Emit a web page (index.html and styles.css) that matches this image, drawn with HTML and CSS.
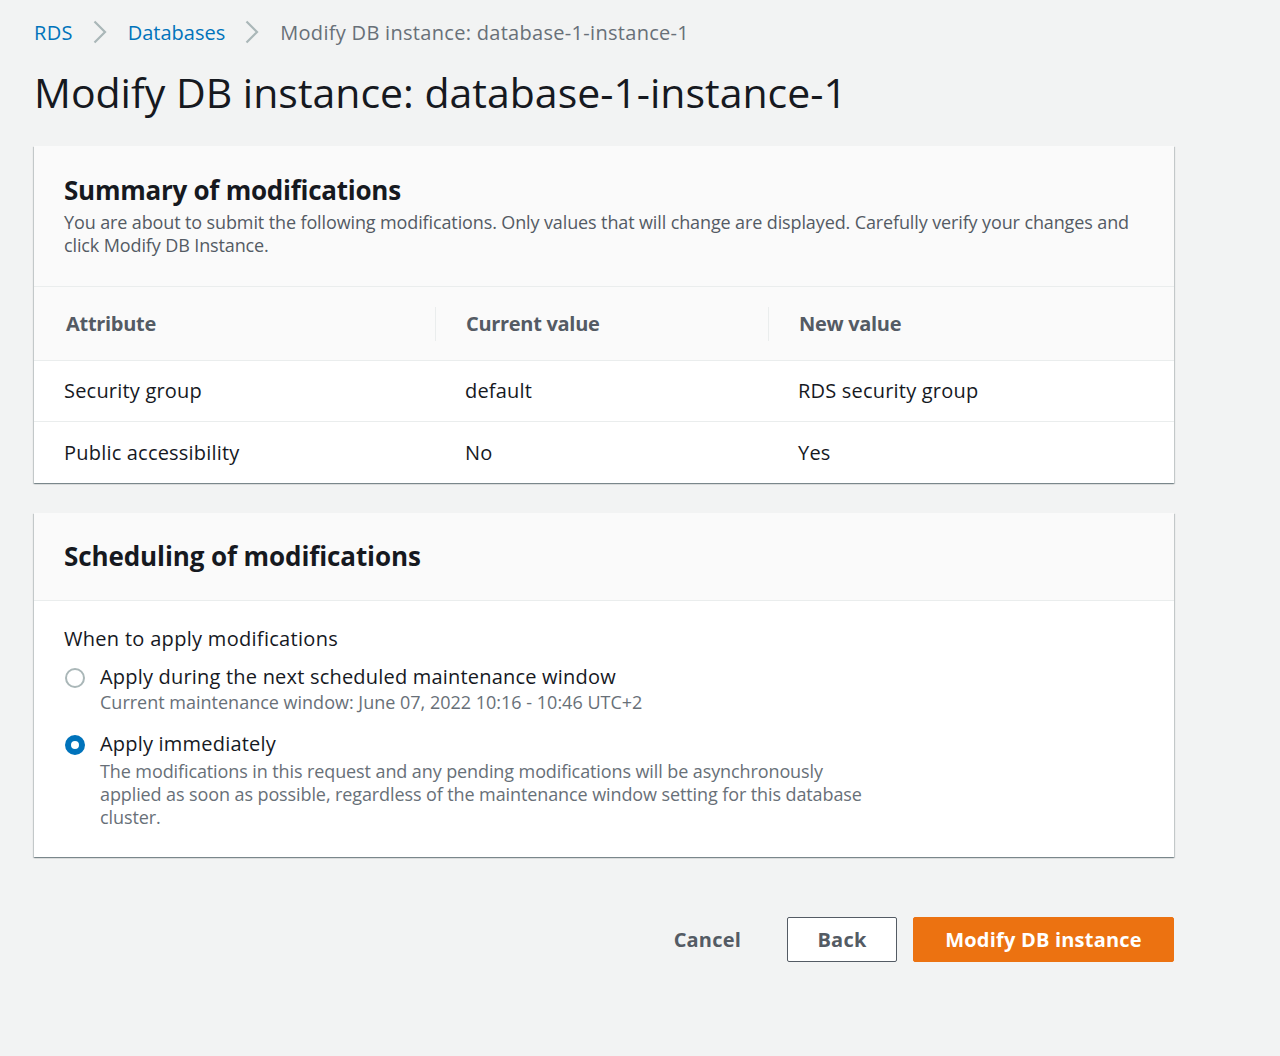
FILE: index.html
```html
<!DOCTYPE html>
<html>
<head>
<meta charset="utf-8">
<link rel="stylesheet" href="styles.css">
</head>
<body>
<div class="page">
  <nav class="crumbs">
    <a class="crumb-link">RDS</a>
    <svg class="chev" width="14" height="24" viewBox="0 0 14 24"><path d="M1.5 1.5 L12 12 L1.5 22.5" fill="none" stroke="#aab7b8" stroke-width="2.2"/></svg>
    <a class="crumb-link">Databases</a>
    <svg class="chev" width="14" height="24" viewBox="0 0 14 24"><path d="M1.5 1.5 L12 12 L1.5 22.5" fill="none" stroke="#aab7b8" stroke-width="2.2"/></svg>
    <span class="crumb-current">Modify DB instance: database-1-instance-1</span>
  </nav>
  <h1 class="title">Modify DB instance: database-1-instance-1</h1>

  <section class="card">
    <header class="card-head summary-head">
      <h2 class="card-title">Summary of modifications</h2>
      <p class="card-desc">You are about to submit the following modifications. Only values that will change are displayed. Carefully verify your changes and click Modify DB Instance.</p>
    </header>
    <div class="table">
      <div class="trow thead">
        <div class="cell c1">Attribute</div>
        <div class="cell c2 sep">Current value</div>
        <div class="cell c3 sep">New value</div>
      </div>
      <div class="trow">
        <div class="cell c1">Security group</div>
        <div class="cell c2">default</div>
        <div class="cell c3">RDS security group</div>
      </div>
      <div class="trow">
        <div class="cell c1">Public accessibility</div>
        <div class="cell c2">No</div>
        <div class="cell c3">Yes</div>
      </div>
    </div>
  </section>

  <section class="card">
    <header class="card-head sched-head">
      <h2 class="card-title sched-title">Scheduling of modifications</h2>
    </header>
    <div class="card-body">
      <div class="field-label">When to apply modifications</div>
      <div class="radio">
        <span class="dot"></span>
        <div class="radio-text">
          <div class="radio-label">Apply during the next scheduled maintenance window</div>
          <div class="radio-desc">Current maintenance window: June 07, 2022 10:16 - 10:46 UTC+2</div>
        </div>
      </div>
      <div class="radio second">
        <span class="dot on"></span>
        <div class="radio-text">
          <div class="radio-label">Apply immediately</div>
          <div class="radio-desc narrow">The modifications in this request and any pending modifications will be asynchronously applied as soon as possible, regardless of the maintenance window setting for this database cluster.</div>
        </div>
      </div>
    </div>
  </section>

  <div class="actions">
    <button class="btn link">Cancel</button>
    <button class="btn normal">Back</button>
    <button class="btn primary">Modify DB instance</button>
  </div>
</div>
</body>
</html>
```

FILE: styles.css
```css
html, body {
  margin: 0;
  padding: 0;
  background: #f2f3f3;
}
body {
  font-family: "Open Sans", "Noto Sans", sans-serif;
  color: #16191f;
}
.page {
  width: 1140px;
  padding: 16px 0 0 34px;
}
.crumbs {
  display: flex;
  align-items: center;
  height: 32px;
  font-size: 20px;
  letter-spacing: 0.3px;
}
.crumb-link {
  color: #0073bb;
}
.crumb-link + .chev + .crumb-link {
  letter-spacing: 0;
}
.chev {
  margin: 0 21px 0 20px;
}
.crumb-current {
  color: #687078;
}
.title {
  margin: 20px 0 0 0;
  font-size: 41px;
  font-weight: 400;
  line-height: 48px;
  letter-spacing: 0;
}
.card {
  background: #fff;
  box-shadow: 0 1px 1px 0 rgba(0,28,36,0.3), 1px 1px 1px 0 rgba(0,28,36,0.15), -1px 1px 1px 0 rgba(0,28,36,0.15);
  margin-top: 30px;
}
.card-head {
  background: #fafafa;
  border-bottom: 1px solid #eaeded;
  padding: 0 30px;
  box-sizing: border-box;
}
.summary-head {
  height: 141px;
  padding-top: 26px;
}
.sched-head {
  height: 88px;
  padding-top: 25px;
}
.card-title {
  margin: 0;
  font-size: 26px;
  font-weight: 700;
  line-height: 36px;
  letter-spacing: -0.25px;
}
.sched-title {
  letter-spacing: -0.1px;
}
.card-desc {
  margin: 3px 0 0 0;
  font-size: 18px;
  line-height: 23px;
  color: #545b64;
  letter-spacing: -0.12px;
}
.trow {
  display: flex;
  border-bottom: 1px solid #eaeded;
  height: 60px;
  align-items: center;
  font-size: 20px;
  letter-spacing: 0.2px;
}
.trow:last-child {
  border-bottom: none;
  height: 61px;
}
.thead {
  background: #fafafa;
  height: 73px;
  font-weight: 700;
  color: #545b64;
  letter-spacing: -0.3px;
}
.cell {
  box-sizing: border-box;
  padding-left: 30px;
  height: 34px;
  line-height: 34px;
}
.thead .cell {
  padding-left: 32px;
}
.thead .cell.sep {
  border-left: 1px solid #eaeded;
  padding-left: 30px;
}
.c1 { width: 401px; }
.c2 { width: 333px; }
.c3 { flex: 1; }
.card-body {
  padding: 24px 30px 28px 30px;
}
.field-label {
  font-size: 20px;
  line-height: 28px;
  letter-spacing: 0.3px;
}
.radio {
  display: flex;
  margin-top: 10px;
}
.radio.second {
  margin-top: 16px;
}
.dot {
  width: 20px;
  height: 20px;
  border: 2px solid #aab7b8;
  border-radius: 50%;
  box-sizing: border-box;
  margin: 5px 15px 0 1px;
  flex: none;
  background: #fff;
}
.dot.on {
  border: 6px solid #0073bb;
}
.radio-label {
  font-size: 20px;
  line-height: 28px;
  letter-spacing: 0.2px;
}
.radio-desc {
  font-size: 18px;
  line-height: 23px;
  color: #687078;
}
.radio-desc.narrow {
  width: 780px;
  margin-top: 2px;
  letter-spacing: -0.1px;
}
.actions {
  display: flex;
  justify-content: flex-end;
  align-items: center;
  margin-top: 60px;
  gap: 16px;
}
.btn {
  font-family: inherit;
  font-size: 20px;
  font-weight: 700;
  height: 45px;
  border-radius: 2px;
  cursor: pointer;
  letter-spacing: 0.2px;
}
.btn.link {
  background: none;
  border: none;
  color: #545b64;
  padding: 0 30px;
}
.btn.normal {
  background: #fff;
  border: 1px solid #545b64;
  color: #545b64;
  width: 110px;
}
.btn.primary {
  background: #ec7211;
  border: 1px solid #ec7211;
  color: #fff;
  width: 261px;
}
```
